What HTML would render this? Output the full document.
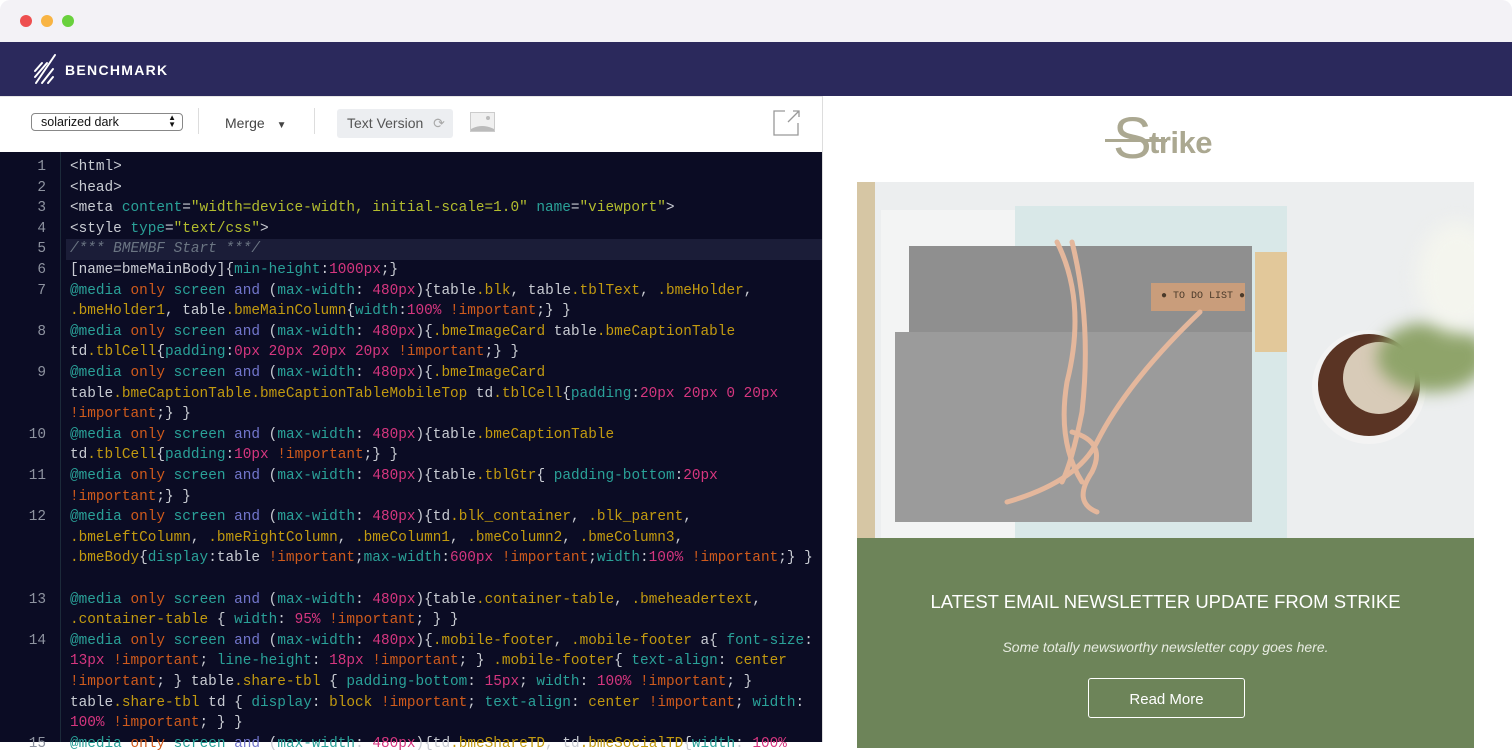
<!DOCTYPE html>
<html><head><meta charset="utf-8"><style>
*{margin:0;padding:0;box-sizing:border-box}
body{width:1512px;height:742px;overflow:hidden;background:#fff;font-family:"Liberation Sans",sans-serif;position:relative}
.top{position:absolute;left:0;top:0;width:1512px;height:42px;background:#f3f2f6;border-radius:10px 10px 0 0}
.dot{position:absolute;top:15px;width:12px;height:12px;border-radius:50%}
.nav{position:absolute;left:0;top:42px;width:1512px;height:54px;background:#2b295c}
.nav .brand{position:absolute;left:65px;top:20px;color:#fff;font-weight:bold;font-size:14px;letter-spacing:1.3px}
.tb{position:absolute;left:0;top:96px;width:822px;height:56px;background:#fff;border-top:1px solid #e6e6e6}
.sel{position:absolute;left:31px;top:16px;width:152px;height:18px;border:1px solid #888;border-radius:4px;font-size:12.5px;padding-left:9px;line-height:16px;color:#111}
.vs{position:absolute;top:11px;width:1px;height:26px;background:#ddd}
.merge{position:absolute;left:225px;top:18px;font-size:14px;color:#444}
.tv{position:absolute;left:337px;top:12px;width:116px;height:29px;background:#eceef1;border-radius:3px;font-size:14px;color:#555;line-height:29px;padding-left:10px}
.ed{position:absolute;left:0;top:152px;width:822px;height:590px;background:#0b0c24;font-family:"Liberation Mono",monospace;font-size:14.4px;color:#c9ccd3}
.gut{position:absolute;left:60px;top:0;width:1px;height:590px;background:#1c2a3a}
.r{position:absolute;left:0;height:20.6px;line-height:20.6px;white-space:pre;width:822px}
.n{position:absolute;left:0;width:46px;text-align:right;color:#8e93a0}
.x{position:absolute;left:70px}
.hl{background:#1b1d38}
.t{color:#2aa198}.y{color:#b3bd2e}.o{color:#cf5a1c}.b{color:#7276cc}.c{color:#c29a10}.p{color:#d6367f}.cm{color:#6b7583;font-style:italic}
.right{position:absolute;left:822px;top:96px;width:690px;height:646px;background:#fff;border-left:1px solid #ddd}
</style></head><body>
<div class="top"><div class="dot" style="left:20px;background:#ee4f4f"></div><div class="dot" style="left:41px;background:#f8b443"></div><div class="dot" style="left:62px;background:#69d13d"></div></div>
<div class="nav">
<svg style="position:absolute;left:33px;top:10px" width="28" height="34" viewBox="0 0 28 34"><g stroke="#fff" stroke-width="2" stroke-linecap="round"><line x1="2" y1="19" x2="9" y2="11"/><line x1="2" y1="25" x2="14" y2="11"/><line x1="3" y1="31" x2="22" y2="3"/><line x1="9" y1="31" x2="20" y2="17"/><line x1="15" y1="31" x2="20" y2="25"/></g></svg>
<div class="brand">BENCHMARK</div></div>
<div class="tb">
<div class="sel">solarized dark<span style="position:absolute;right:6px;top:0px;font-size:8px;line-height:7px">▲<br>▼</span></div>
<div class="vs" style="left:198px"></div>
<div class="merge">Merge <span style="font-size:10px;margin-left:8px">▼</span></div>
<div class="vs" style="left:314px"></div>
<div class="tv">Text Version <span style="color:#aaa;margin-left:6px">⟳</span></div>
<svg style="position:absolute;left:470px;top:15px" width="25" height="20"><rect x="0.5" y="0.5" width="24" height="19" fill="#f0f0f0" stroke="#ccc"/><path d="M1 17 Q12 11 24 17 L24 19 L1 19Z" fill="#bbb"/><circle cx="18" cy="6" r="2" fill="#bbb"/></svg>
</div>
<div class="ed">
<div class="gut"></div>
<div class="r" style="top:5px"><span class="n">1</span><span class="x">&lt;html&gt;</span></div>
<div class="r" style="top:25.6px"><span class="n">2</span><span class="x">&lt;head&gt;</span></div>
<div class="r" style="top:46.2px"><span class="n">3</span><span class="x">&lt;meta <span class="t">content</span>=<span class="y">"width=device-width, initial-scale=1.0"</span> <span class="t">name</span>=<span class="y">"viewport"</span>&gt;</span></div>
<div class="r" style="top:66.8px"><span class="n">4</span><span class="x">&lt;style <span class="t">type</span>=<span class="y">"text/css"</span>&gt;</span></div>
<div class="r hl" style="top:87.4px;left:66px;width:756px"><span class="n" style="left:-66px">5</span><span class="x cm" style="left:4px">/*** BMEMBF Start ***/</span></div>
<div class="r" style="top:108px"><span class="n">6</span><span class="x">[name=bmeMainBody]{<span class="t">min-height</span>:<span class="p">1000px</span>;}</span></div>
<div class="r" style="top:128.6px"><span class="n">7</span><span class="x"><span class="t">@media</span> <span class="o">only</span> <span class="t">screen</span> <span class="b">and</span> (<span class="t">max-width</span>: <span class="p">480px</span>){table<span class="c">.blk</span>, table<span class="c">.tblText</span>, <span class="c">.bmeHolder</span>,</span></div>
<div class="r" style="top:149.2px"><span class="x"><span class="c">.bmeHolder1</span>, table<span class="c">.bmeMainColumn</span>{<span class="t">width</span>:<span class="p">100%</span> <span class="o">!important</span>;} }</span></div>
<div class="r" style="top:169.8px"><span class="n">8</span><span class="x"><span class="t">@media</span> <span class="o">only</span> <span class="t">screen</span> <span class="b">and</span> (<span class="t">max-width</span>: <span class="p">480px</span>){<span class="c">.bmeImageCard</span> table<span class="c">.bmeCaptionTable</span></span></div>
<div class="r" style="top:190.4px"><span class="x">td<span class="c">.tblCell</span>{<span class="t">padding</span>:<span class="p">0px 20px 20px 20px</span> <span class="o">!important</span>;} }</span></div>
<div class="r" style="top:211px"><span class="n">9</span><span class="x"><span class="t">@media</span> <span class="o">only</span> <span class="t">screen</span> <span class="b">and</span> (<span class="t">max-width</span>: <span class="p">480px</span>){<span class="c">.bmeImageCard</span></span></div>
<div class="r" style="top:231.6px"><span class="x">table<span class="c">.bmeCaptionTable.bmeCaptionTableMobileTop</span> td<span class="c">.tblCell</span>{<span class="t">padding</span>:<span class="p">20px 20px 0 20px</span></span></div>
<div class="r" style="top:252.2px"><span class="x"><span class="o">!important</span>;} }</span></div>
<div class="r" style="top:272.8px"><span class="n">10</span><span class="x"><span class="t">@media</span> <span class="o">only</span> <span class="t">screen</span> <span class="b">and</span> (<span class="t">max-width</span>: <span class="p">480px</span>){table<span class="c">.bmeCaptionTable</span></span></div>
<div class="r" style="top:293.4px"><span class="x">td<span class="c">.tblCell</span>{<span class="t">padding</span>:<span class="p">10px</span> <span class="o">!important</span>;} }</span></div>
<div class="r" style="top:314px"><span class="n">11</span><span class="x"><span class="t">@media</span> <span class="o">only</span> <span class="t">screen</span> <span class="b">and</span> (<span class="t">max-width</span>: <span class="p">480px</span>){table<span class="c">.tblGtr</span>{ <span class="t">padding-bottom</span>:<span class="p">20px</span></span></div>
<div class="r" style="top:334.6px"><span class="x"><span class="o">!important</span>;} }</span></div>
<div class="r" style="top:355.2px"><span class="n">12</span><span class="x"><span class="t">@media</span> <span class="o">only</span> <span class="t">screen</span> <span class="b">and</span> (<span class="t">max-width</span>: <span class="p">480px</span>){td<span class="c">.blk_container</span>, <span class="c">.blk_parent</span>,</span></div>
<div class="r" style="top:375.8px"><span class="x"><span class="c">.bmeLeftColumn</span>, <span class="c">.bmeRightColumn</span>, <span class="c">.bmeColumn1</span>, <span class="c">.bmeColumn2</span>, <span class="c">.bmeColumn3</span>,</span></div>
<div class="r" style="top:396.4px"><span class="x"><span class="c">.bmeBody</span>{<span class="t">display</span>:table <span class="o">!important</span>;<span class="t">max-width</span>:<span class="p">600px</span> <span class="o">!important</span>;<span class="t">width</span>:<span class="p">100%</span> <span class="o">!important</span>;} }</span></div>
<div class="r" style="top:437.6px"><span class="n">13</span><span class="x"><span class="t">@media</span> <span class="o">only</span> <span class="t">screen</span> <span class="b">and</span> (<span class="t">max-width</span>: <span class="p">480px</span>){table<span class="c">.container-table</span>, <span class="c">.bmeheadertext</span>,</span></div>
<div class="r" style="top:458.2px"><span class="x"><span class="c">.container-table</span> { <span class="t">width</span>: <span class="p">95%</span> <span class="o">!important</span>; } }</span></div>
<div class="r" style="top:478.8px"><span class="n">14</span><span class="x"><span class="t">@media</span> <span class="o">only</span> <span class="t">screen</span> <span class="b">and</span> (<span class="t">max-width</span>: <span class="p">480px</span>){<span class="c">.mobile-footer</span>, <span class="c">.mobile-footer</span> a{ <span class="t">font-size</span>:</span></div>
<div class="r" style="top:499.4px"><span class="x"><span class="p">13px</span> <span class="o">!important</span>; <span class="t">line-height</span>: <span class="p">18px</span> <span class="o">!important</span>; } <span class="c">.mobile-footer</span>{ <span class="t">text-align</span>: <span class="c">center</span></span></div>
<div class="r" style="top:520px"><span class="x"><span class="o">!important</span>; } table<span class="c">.share-tbl</span> { <span class="t">padding-bottom</span>: <span class="p">15px</span>; <span class="t">width</span>: <span class="p">100%</span> <span class="o">!important</span>; }</span></div>
<div class="r" style="top:540.6px"><span class="x">table<span class="c">.share-tbl</span> td { <span class="t">display</span>: <span class="c">block</span> <span class="o">!important</span>; <span class="t">text-align</span>: <span class="c">center</span> <span class="o">!important</span>; <span class="t">width</span>:</span></div>
<div class="r" style="top:561.2px"><span class="x"><span class="p">100%</span> <span class="o">!important</span>; } }</span></div>
<div class="r" style="top:581.8px"><span class="n">15</span><span class="x"><span class="t">@media</span> <span class="o">only</span> <span class="t">screen</span> <span class="b">and</span> (<span class="t">max-width</span>: <span class="p">480px</span>){td<span class="c">.bmeShareTD</span>, td<span class="c">.bmeSocialTD</span>{<span class="t">width</span>: <span class="p">100%</span></span></div>
</div>
<div class="right">
<svg style="position:absolute;left:-50px;top:13px" width="28" height="28"><path d="M12 2 H1 V26 H25 V14" fill="none" stroke="#999" stroke-width="1.3"/><path d="M15 13 L26 2 M20 2 H26 V8" fill="none" stroke="#999" stroke-width="1.3"/></svg>
<div style="position:absolute;left:290px;top:14px;font-family:'Liberation Sans',sans-serif;font-size:58px;color:#aba891;line-height:58px">S</div>
<div style="position:absolute;left:282px;top:43px;width:62px;height:3px;background:#aba891"></div>
<div style="position:absolute;left:326px;top:29px;font-size:31px;font-weight:bold;color:#aba891;letter-spacing:-0.5px">trike</div>
<div style="position:absolute;left:34px;top:86px;width:617px;height:356px;background:#eceeef;overflow:hidden">
 <div style="position:absolute;left:0;top:0;width:18px;height:356px;background:#d6c6a4"></div>
 <div style="position:absolute;left:24px;top:28px;width:406px;height:350px;background:#f3f4f4"></div>
 <div style="position:absolute;left:158px;top:24px;width:272px;height:345px;background:#d9e8e8"></div>
 <div style="position:absolute;left:398px;top:70px;width:32px;height:100px;background:#e2c89a"></div>
 <div style="position:absolute;left:52px;top:64px;width:343px;height:90px;background:#8f8f8f"></div>
 <div style="position:absolute;left:38px;top:150px;width:357px;height:190px;background:#9b9b9b;"></div>
 <div style="position:absolute;left:294px;top:101px;width:94px;height:28px;background:#c99d7b;font-family:'Liberation Mono',monospace;font-size:10px;line-height:28px;color:#4a3a2a;padding-left:10px">● TO DO LIST ●</div>
 <svg style="position:absolute;left:0;top:0" width="617" height="356"><g fill="none" stroke="#e4b79c" stroke-width="5" stroke-linecap="round"><path d="M200 60 Q230 120 210 200 Q200 260 225 300"/><path d="M215 60 Q235 140 225 230 Q215 280 205 300"/><path d="M343 130 Q270 200 240 260 Q220 300 150 320"/><path d="M215 250 Q250 260 235 290 Q215 320 240 330"/></g></svg>
 <div style="position:absolute;left:455px;top:148px;width:114px;height:114px;border-radius:50%;background:#f3f3f3"></div>
 <div style="position:absolute;left:461px;top:152px;width:102px;height:102px;border-radius:50%;background:#5a3424"></div>
 <div style="position:absolute;left:486px;top:160px;width:72px;height:72px;border-radius:50%;background:#d8cbb8"></div>
 <div style="position:absolute;left:520px;top:140px;width:110px;height:70px;border-radius:50%;background:#8fa46a;filter:blur(8px)"></div>
 <div style="position:absolute;left:560px;top:40px;width:80px;height:110px;border-radius:50%;background:#f4f5ee;filter:blur(10px)"></div>
</div>
<div style="position:absolute;left:34px;top:442px;width:617px;height:210px;background:#6d8459">
 <div style="position:absolute;left:0;top:53px;width:617px;text-align:center;color:#fff;font-size:18.5px">LATEST EMAIL NEWSLETTER UPDATE FROM STRIKE</div>
 <div style="position:absolute;left:0;top:101px;width:617px;text-align:center;color:#e8ece2;font-size:14px;font-style:italic">Some totally newsworthy newsletter copy goes here.</div>
 <div style="position:absolute;left:231px;top:140px;width:157px;height:40px;border:1.5px solid #fff;border-radius:3px;color:#fff;font-size:15px;text-align:center;line-height:37px;padding-top:2px">Read More</div>
</div>
</div>
</body></html>
